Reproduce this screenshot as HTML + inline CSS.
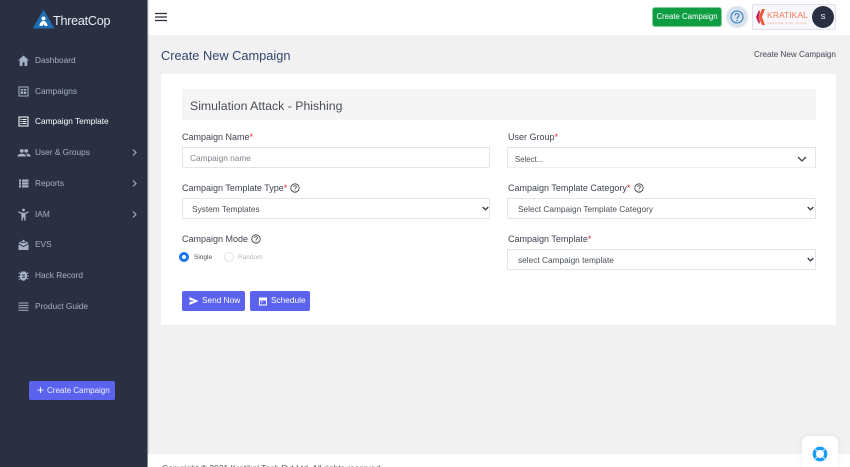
<!DOCTYPE html>
<html lang="en"><head><meta charset="utf-8"><title>Create New Campaign</title>
<style>
html,body{margin:0;padding:0;width:850px;height:467px;overflow:hidden;background:#f1f1f1;font-family:"Liberation Sans",sans-serif}
#wrap{position:relative;width:850px;height:467px;overflow:hidden}
.a{position:absolute;white-space:nowrap}
#side{left:0;top:0;width:147px;height:467px;background:#2a3042;box-shadow:1px 0 1px #666a72}
.nav{left:35px;font-size:8.3px;line-height:12px;color:#a6b0c6}
.ic{position:absolute;left:17px;width:13px;height:13px;fill:#a6b0c6}
.chev{left:132px;width:5px;height:7px;position:absolute;fill:none;stroke:#a6b0c6;stroke-width:1.1}
.lab{font-size:9px;line-height:12px;color:#3e4450}
.lab i{color:#e0263a;font-style:normal}
.f{background:#fff;border:1px solid #e2e6ea;box-sizing:border-box;font-size:8.3px;color:#495057;line-height:21px}
.car{position:absolute;fill:none;stroke:#343a40;stroke-width:1.3}
.btn{background:#5b63ee;border-radius:2px;color:#fff;font-size:8.3px;text-align:left}
</style></head><body><div id="wrap">
<div class="a" style="left:148px;top:0;width:702px;height:35px;background:#fff"></div>
<div class="a" id="side"></div>

<svg class="a" style="left:33px;top:10px" width="21" height="19" viewBox="0 0 21 19"><path d="M10.5 0.5 20.5 18H0.5Z" fill="#1f6fb5" stroke="#1f6fb5" stroke-linejoin="round"/><circle cx="10.5" cy="8.5" r="2" fill="#fff"/><path d="M6.5 16c0-3 2-5 4-5s4 2 4 5h-2.8l-1.2-2-1.2 2Z" fill="#fff"/></svg>
<div class="a" style="left:53px;top:13px;font-size:12.6px;line-height:16px;color:#e9edf5;letter-spacing:-.25px">ThreatCop</div>

<svg class="ic" style="top:54px" viewBox="0 0 13 13"><path d="M6.5 1.5 1 6.500h1.700V12h2.800V8.200h2V12h2.800V6.500H12Z"/></svg>
<div class="a nav" style="top:54px">Dashboard</div>
<svg class="ic" style="top:85px" viewBox="0 0 13 13"><path fill-rule="evenodd" d="M1.500 1.500h10v10h-10Zm1 1v8h8v-8ZM3.700 4h2.500v1.500H3.700Zm3.200 0h2.400v1.500H6.900ZM3.700 6.500h2.500V9H3.700Zm3.200 0h2.400V9H6.900Z"/></svg>
<div class="a nav" style="top:85px">Campaigns</div>
<svg class="ic" style="top:115px;fill:#fff" viewBox="0 0 13 13"><path fill-rule="evenodd" d="M1.500 1.500h10v10h-10Zm1 1v8h8v-8ZM3.500 4h1.200v1H3.500Zm2 0h4v1h-4Zm-2 2h1.200v1H3.500Zm2 0h4v1h-4Zm-2 2h1.200v1H3.500Zm2 0h4v1h-4Z"/></svg>
<div class="a nav" style="top:115px;color:#fff">Campaign Template</div>
<svg class="ic" style="top:146px;width:14px" viewBox="0 0 14 13"><path d="M4.800 3a1.900 1.900 0 1 1 0 3.800 1.900 1.900 0 0 1 0-3.800Zm4.400 0a1.900 1.900 0 1 1 0 3.800 1.900 1.900 0 0 1 0-3.800ZM.5 10.500c0-2 2-2.800 4.300-2.800s4.200.8 4.200 2.800ZM9.800 7.700c2 0 3.900.8 3.900 2.800H10c0-1.100-.3-2-.9-2.800Z"/></svg>
<div class="a nav" style="top:146px">User &amp; Groups</div>
<svg class="chev" style="top:149px" viewBox="0 0 5 7"><path d="M1 .5 4 3.500 1 6.500"/></svg>
<svg class="ic" style="top:177px" viewBox="0 0 13 13"><path d="M2 2.500h2v2.200H2Zm3 0h6.500v2.200H5ZM2 5.400h2v2.200H2Zm3 0h6.500v2.200H5ZM2 8.300h2v2.200H2Zm3 0h6.500v2.200H5Z"/></svg>
<div class="a nav" style="top:177px">Reports</div>
<svg class="chev" style="top:180px" viewBox="0 0 5 7"><path d="M1 .5 4 3.500 1 6.500"/></svg>
<svg class="ic" style="top:208px" viewBox="0 0 13 13"><circle cx="6.500" cy="2" r="1.400"/><path d="M1.500 3.400 5 4.800h3l3.500-1.400.4 1L8.600 6v6.500H7.200V9.500H5.800v3H4.400V6L1.100 4.400Z"/></svg>
<div class="a nav" style="top:208px">IAM</div>
<svg class="chev" style="top:211px" viewBox="0 0 5 7"><path d="M1 .5 4 3.500 1 6.500"/></svg>
<svg class="ic" style="top:238px" viewBox="0 0 13 13"><path d="M1.500 5.200 4 3.300V5h5V3.300l2.500 1.900L6.500 8ZM4.200 4.300 6.500 1.500l2.300 2.800ZM1.500 6.200 6.500 9l5-2.800V12h-10Z"/></svg>
<div class="a nav" style="top:238px">EVS</div>
<svg class="ic" style="top:269px" viewBox="0 0 13 13"><path d="M4.500 2.500h4L9.500 4.200l1.500-1 .5.800-1.600 1.100v1.300h1.800v1H9.900v1.200l1.600 1.100-.5.800-1.700-1.100C8.700 11 7.700 11.800 6.500 11.800S4.300 11 3.700 10l-1.700 1.100-.5-.8 1.600-1.100V8H1.300V7h1.800V5.100L1.500 4l.5-.8 1.500 1Zm.6 3v1h2.800v-1Zm0 2.300v1h2.800v-1Z"/></svg>
<div class="a nav" style="top:269px">Hack Record</div>
<svg class="ic" style="top:300px" viewBox="0 0 13 13"><path d="M1.500 2.500h10v1h-10Zm0 2.400h10v1h-10Zm0 2.400h10v1h-10Zm0 2.400h10v1h-10Z"/></svg>
<div class="a nav" style="top:300px">Product Guide</div>

<div class="a btn" style="left:29px;top:381px;width:86px;height:19px;line-height:19px"><span style="position:absolute;left:8px;top:0;font-size:12px;line-height:18px">+</span><span style="position:absolute;left:18px;font-size:8px;color:#f0f1ff">Create Campaign</span></div>

<svg class="a" style="left:154px;top:12px" width="14" height="10" viewBox="0 0 14 10"><path d="M1 1.500h12M1 5h12M1 8.500h12" stroke="#2a2e36" stroke-width="1.200"/></svg>

<div class="a" style="left:652px;top:7px;width:70px;height:20px;box-sizing:border-box;background:#0f9d44;border:1.500px solid #7fd29a;border-radius:3px;color:#fff;font-size:7.800px;line-height:17px;text-align:center">Create Campaign</div>
<div class="a" style="left:726px;top:6px;width:22px;height:22px;border-radius:50%;background:#d9e4ef"></div>
<svg class="a" style="left:730px;top:10px" width="14" height="14" viewBox="0 0 14 14"><circle cx="7" cy="7" r="6" fill="none" stroke="#2f78c0" stroke-width="1.100"/><path d="M5 5.500C5 3 9 3 9 5.500 9 7 7 7 7 8.800" fill="none" stroke="#2f78c0" stroke-width="1.100"/><circle cx="7" cy="10.600" r=".7" fill="#2f78c0"/></svg>
<div class="a" style="left:752px;top:4px;width:84px;height:26px;box-sizing:border-box;background:#f8f8fc;border:1px solid #dfe2ea;border-radius:2px"></div>
<svg class="a" style="left:755px;top:8px" width="11" height="18" viewBox="0 0 11 18"><path d="M7 1h3L7 9l3 8H7L3.500 9Z" fill="#ee5a3a"/><path d="M4 2 1 9l3 7 1-2-1.500-5L5 4Z" fill="#c2185b"/></svg>
<div class="a" style="left:767px;top:10px;font-size:8.600px;line-height:11px;color:#f07a55">KRATIKAL</div>
<div class="a" style="left:767px;top:21px;font-size:3px;line-height:4px;color:#f0a58a;letter-spacing:.75px">SECURE FOR SURE</div>
<div class="a" style="left:812px;top:6px;width:22px;height:22px;border-radius:50%;background:#2a3042;color:#fff;font-size:7.500px;line-height:22px;text-align:center">S</div>

<div class="a" style="left:161px;top:47px;font-size:12.800px;line-height:17px;color:#33476b">Create New Campaign</div>
<div class="a" style="left:754px;top:49px;font-size:8.100px;line-height:12px;color:#3e4450">Create New Campaign</div>

<div class="a" style="left:161px;top:74px;width:675px;height:251px;background:#fff;border-radius:2px"></div>
<div class="a" style="left:182px;top:89px;width:634px;height:31px;background:#f5f5f5"></div>
<div class="a" style="left:190px;top:98px;font-size:12.300px;line-height:16px;color:#4a4f58">Simulation Attack - Phishing</div>

<div class="a lab" style="left:182px;top:131px">Campaign Name<i>*</i></div>
<div class="a f" style="left:182px;top:147px;width:308px;height:21px;color:#7d848c;padding-left:7px">Campaign name</div>

<div class="a lab" style="left:182px;top:182px">Campaign Template Type<i>*</i></div>
<svg class="a" style="left:290px;top:183px" width="10" height="10" viewBox="0 0 10 10"><circle cx="5" cy="5" r="4.200" fill="none" stroke="#333" stroke-width=".8"/><path d="M3.600 3.900C3.600 2.400 6.400 2.400 6.400 3.900 6.400 4.900 5 4.900 5 6" fill="none" stroke="#333" stroke-width=".8"/><circle cx="5" cy="7.300" r=".5" fill="#333"/></svg>
<div class="a f" style="left:182px;top:198px;width:308px;height:21px;padding-left:9px">System Templates</div>
<svg class="car" style="left:482px;top:206px" width="7" height="5" viewBox="0 0 7 5"><path d="M.7 1 3.500 3.800 6.300 1"/></svg>

<div class="a lab" style="left:182px;top:233px">Campaign Mode</div>
<svg class="a" style="left:251px;top:234px" width="10" height="10" viewBox="0 0 10 10"><circle cx="5" cy="5" r="4.200" fill="none" stroke="#333" stroke-width=".8"/><path d="M3.600 3.900C3.600 2.400 6.400 2.400 6.400 3.900 6.400 4.900 5 4.900 5 6" fill="none" stroke="#333" stroke-width=".8"/><circle cx="5" cy="7.300" r=".5" fill="#333"/></svg>
<div class="a" style="left:179px;top:252px;width:10px;height:10px;box-sizing:border-box;border-radius:50%;border:3px solid #1b74f0;background:#fff"></div>
<div class="a" style="left:194px;top:252px;font-size:6.500px;line-height:11px;color:#4a4f58">Single</div>
<div class="a" style="left:224px;top:252px;width:10px;height:10px;box-sizing:border-box;border-radius:50%;border:1px solid #e4e4e4;background:#fff"></div>
<div class="a" style="left:238px;top:252px;font-size:6.500px;line-height:11px;color:#b5b8bd">Random</div>

<div class="a lab" style="left:508px;top:131px">User Group<i>*</i></div>
<div class="a f" style="left:507px;top:147px;width:309px;height:21px;border-bottom-color:#eef0f2;padding-left:7px;font-size:7.800px;line-height:23px">Select...</div>
<svg class="car" style="left:797px;top:156px;stroke:#444" width="10" height="6" viewBox="0 0 10 6"><path d="M1 1 5 5 9 1"/></svg>

<div class="a lab" style="left:508px;top:182px">Campaign Template Category<i>*</i></div>
<svg class="a" style="left:634px;top:183px" width="10" height="10" viewBox="0 0 10 10"><circle cx="5" cy="5" r="4.200" fill="none" stroke="#333" stroke-width=".8"/><path d="M3.600 3.900C3.600 2.400 6.400 2.400 6.400 3.900 6.400 4.900 5 4.900 5 6" fill="none" stroke="#333" stroke-width=".8"/><circle cx="5" cy="7.300" r=".5" fill="#333"/></svg>
<div class="a f" style="left:507px;top:198px;width:309px;height:21px;padding-left:10px">Select Campaign Template Category</div>
<svg class="car" style="left:807px;top:206px" width="7" height="5" viewBox="0 0 7 5"><path d="M.7 1 3.500 3.800 6.300 1"/></svg>

<div class="a lab" style="left:508px;top:233px">Campaign Template<i>*</i></div>
<div class="a f" style="left:507px;top:249px;width:309px;height:21px;padding-left:10px">select Campaign template</div>
<svg class="car" style="left:807px;top:257px" width="7" height="5" viewBox="0 0 7 5"><path d="M.7 1 3.500 3.800 6.300 1"/></svg>

<div class="a btn" style="left:182px;top:291px;width:63px;height:20px;line-height:19px"><svg style="position:absolute;left:7px;top:5px" width="10" height="10" viewBox="0 0 10 10"><path d="M.5 1 9.500 5 .5 9V6l5-1-5-1Z" fill="#fff"/></svg><span style="position:absolute;left:20px">Send Now</span></div>
<div class="a btn" style="left:250px;top:291px;width:60px;height:20px;line-height:19px"><svg style="position:absolute;left:8px;top:5px" width="10" height="10" viewBox="0 0 10 10"><path fill-rule="evenodd" d="M1 1.500h8v8H1Zm1 3v4h6v-4Z" fill="#fff"/><path d="M3 5.500h1.500v1H3Z" fill="#fff"/></svg><span style="position:absolute;left:21px">Schedule</span></div>

<div class="a" style="left:148px;top:454px;width:702px;height:13px;background:#fff"></div>
<div class="a" style="left:162px;top:462px;font-size:8.500px;line-height:12px;color:#555">Copyright © 2021 Kratikal Tech Pvt Ltd. All rights reserved.</div>

<div class="a" style="left:802px;top:436px;width:36px;height:31px;background:#fff;border-radius:7px 7px 0 0;box-shadow:0 0 6px rgba(0,0,0,.07)"></div>
<svg class="a" style="left:812px;top:446px" width="16" height="16" viewBox="0 0 16 16"><circle cx="8" cy="8" r="5.700" fill="none" stroke="#1b9cf5" stroke-width="3.400"/><path d="M3.200 3.200 5.600 5.600M12.800 3.200 10.400 5.600M3.200 12.800 5.600 10.400M12.800 12.800 10.400 10.400" stroke="#fff" stroke-width=".9"/></svg>
</div></body></html>
